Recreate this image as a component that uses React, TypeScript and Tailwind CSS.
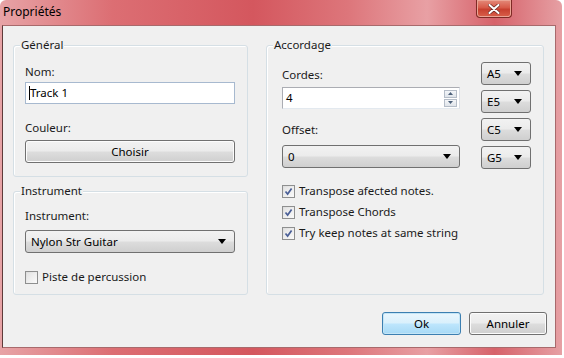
import React from 'react'

const font = { fontFamily: '"Noto Sans", "Open Sans", sans-serif' }

function Arrow() {
  return (
    <svg width="8" height="5" viewBox="0 0 8 5" className="shrink-0">
      <path d="M0 0h8L4 5z" fill="#000" />
    </svg>
  )
}

function Combo({ value, className }: { value: string; className?: string }) {
  return (
    <div className={`flex items-center justify-between h-[23px] pl-[5px] pr-[8px] border border-[#707070] rounded-[3px] bg-[linear-gradient(#f2f2f2_0%,#ebebeb_49%,#dddddd_51%,#cfcfcf_100%)] ${className ?? ''}`}>
      <span className="text-black">{value}</span>
      <Arrow />
    </div>
  )
}

function Button({ label, primary, className }: { label: string; primary?: boolean; className?: string }) {
  return (
    <div
      className={`flex items-center justify-center h-[23px] rounded-[3px] border ${primary
        ? 'border-[#3c7fb1] bg-[linear-gradient(#eaf6fd_0%,#d9f0fc_49%,#bee6fd_51%,#a7d9f5_100%)] shadow-[inset_0_0_0_1px_#c4e5f6]'
        : 'border-[#707070] bg-[linear-gradient(#f2f2f2_0%,#ebebeb_49%,#dddddd_51%,#cfcfcf_100%)] shadow-[inset_0_0_0_1px_#fcfcfc]'} ${className ?? ''}`}
    >
      <span className="text-black">{label}</span>
    </div>
  )
}

function Check({ checked, label }: { checked?: boolean; label: string }) {
  return (
    <div className="flex items-center h-[16px] gap-[4px]">
      <div className="w-[13px] h-[13px] border border-[#8e8f8f] bg-[linear-gradient(135deg,#dcdcdc,#fbfbfb)] p-[1px] shrink-0">
        <div className="w-full h-full bg-[linear-gradient(135deg,#e4e4e4,#f8f8f8)] flex items-center justify-center">
          {checked && (
            <svg width="9" height="9" viewBox="0 0 9 9">
              <path d="M1.5 4.5 L3.6 7 L7.6 1.5" stroke="#4a5f97" strokeWidth="1.7" fill="none" />
            </svg>
          )}
        </div>
      </div>
      <span className="text-[#1a1a1a]">{label}</span>
    </div>
  )
}

function Group({ title, className, bodyClass, children }: { title: string; className?: string; bodyClass?: string; children: React.ReactNode }) {
  return (
    <div className={`border border-[#d5dfe5] rounded-[3px] shadow-[inset_1px_1px_0_#fff] ${className ?? ''}`}>
      <span className="block w-fit -mt-[9px] ml-[6px] px-[1px] h-[16px] leading-[16px] bg-[#f0f0f0] text-[#1a1a1a]">{title}</span>
      <div className={bodyClass}>{children}</div>
    </div>
  )
}

export default function App() {
  return (
    <div className="w-[564px] h-[358px] bg-white text-[11.5px] leading-[16px]" style={font}>
      <div className="w-[562px] h-[355px] flex flex-col rounded-tl-[6px] rounded-tr-[6px] bg-[linear-gradient(90deg,#e7a3a6_0%,#dc6e73_20%,#d4575e_45%,#dd767b_62%,#e8a0a4_76%,#d6626a_88%,#e6a0a4_100%)] px-[2px] pb-[7px]">
        {/* title bar */}
        <div className="h-[25px] flex justify-between shrink-0">
          <span className="pl-[1px] pt-[4px] text-[12px] text-black">Propriétés</span>
          <div className="mr-[48px] w-[36px] h-[18px] rounded-b-[4px] border border-t-0 border-[#7e2a25] bg-[linear-gradient(#e48a7a_0%,#d75a48_45%,#c7402f_55%,#d9604b_100%)] shadow-[inset_0_0_0_1px_#eba494] flex items-center justify-center">
            <svg width="12" height="10" viewBox="0 0 12 10">
              <path d="M1.5 1 L10.5 9 M10.5 1 L1.5 9" stroke="#6b2a24" strokeWidth="3.4" strokeLinecap="round" />
              <path d="M1.5 1 L10.5 9 M10.5 1 L1.5 9" stroke="#fff" strokeWidth="2" strokeLinecap="round" />
            </svg>
          </div>
        </div>

        {/* client area */}
        <div className="flex-1 flex flex-col bg-[#f0f0f0] border border-[#a86a6c] border-l-[#5e3a3a] mr-[4px] pt-[19px] pl-[10px]">
          <div className="flex gap-[18px]">
            <div className="flex flex-col w-[235px]">
              <Group title="Général" className="h-[132px]" bodyClass="pl-[11px] pr-[12px]">
                <div className="mt-[11px] text-[#1a1a1a]">Nom:</div>
                <div className="mt-[2px] h-[22px] border border-[#a7b9cf] bg-white flex items-center pl-[3px]">
                  <span className="w-px h-[14px] bg-black" />
                  <span className="text-black">Track 1</span>
                </div>
                <div className="mt-[16px] text-[#1a1a1a]">Couleur:</div>
                <Button label="Choisir" className="mt-[4px]" />
              </Group>
              <Group title="Instrument" className="mt-[14px] h-[104px]" bodyClass="pl-[11px] pr-[12px]">
                <div className="mt-[9px] text-[#1a1a1a]">Instrument:</div>
                <Combo value="Nylon Str Guitar" className="mt-[6px] h-[22px]" />
                <div className="mt-[16px]">
                  <Check label="Piste de percussion" />
                </div>
              </Group>
            </div>

            <Group title="Accordage" className="w-[278px] h-[250px]" bodyClass="pl-[15px] pr-[12px]">
              <div className="flex justify-between">
                <div className="flex flex-col w-[178px]">
                  <div className="mt-[14px] text-[#1a1a1a]">Cordes:</div>
                  <div className="mt-[4px] h-[22px] border border-[#abadb3] border-r-[#dbdfe6] border-b-[#e3e9ef] bg-white flex items-center justify-between pl-[3px] pr-[2px]">
                    <span className="text-black">4</span>
                    <div className="flex flex-col gap-[1px]">
                      <div className="w-[13px] h-[8px] border border-[#b5bdc8] bg-[linear-gradient(#f4f6f9,#dfe4ea)] flex items-center justify-center">
                        <svg width="5" height="3" viewBox="0 0 5 3"><path d="M0 3h5L2.5 0z" fill="#4c607a" /></svg>
                      </div>
                      <div className="w-[13px] h-[8px] border border-[#b5bdc8] bg-[linear-gradient(#f4f6f9,#dfe4ea)] flex items-center justify-center">
                        <svg width="5" height="3" viewBox="0 0 5 3"><path d="M0 0h5L2.5 3z" fill="#4c607a" /></svg>
                      </div>
                    </div>
                  </div>
                  <div className="mt-[13px] text-[#1a1a1a]">Offset:</div>
                  <Combo value="0" className="mt-[7px]" />
                </div>
                <div className="flex flex-col w-[50px] mt-[9px] gap-[5px]">
                  <Combo value="A5" />
                  <Combo value="E5" />
                  <Combo value="C5" />
                  <Combo value="G5" />
                </div>
              </div>
              <div className="flex flex-col gap-[5px] mt-[14px]">
                <Check checked label="Transpose afected notes." />
                <Check checked label="Transpose Chords" />
                <Check checked label="Try keep notes at same string" />
              </div>
            </Group>
          </div>

          <div className="flex justify-end gap-[8px] mt-[17px] pr-[8px]">
            <Button primary label="Ok" className="w-[79px]" />
            <Button label="Annuler" className="w-[78px]" />
          </div>
        </div>
      </div>
    </div>
  )
}
